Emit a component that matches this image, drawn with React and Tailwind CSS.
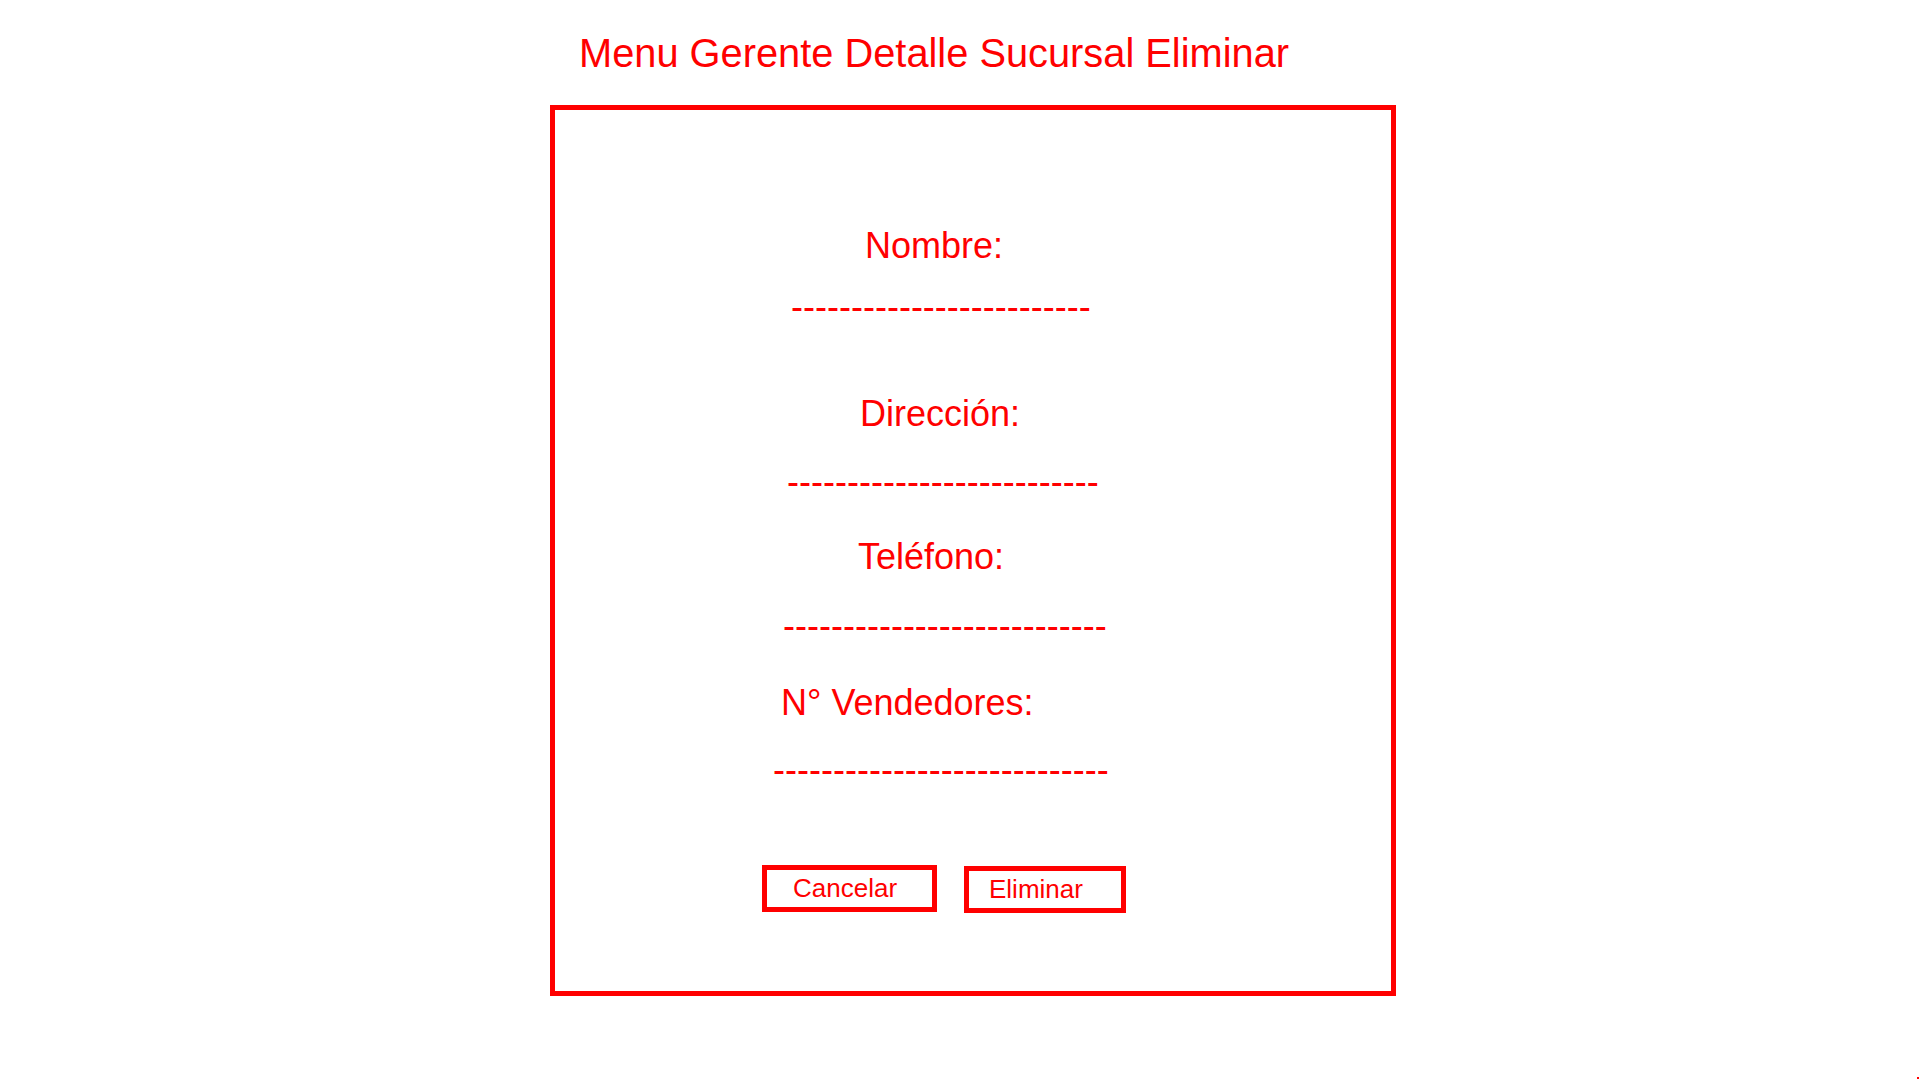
import React from "react";

const rows = [
  { text: "Nombre:", mt: "mt-[118px]", ml: "ml-[310px]" },
  { text: "-".repeat(25), mt: "mt-[25px]", ml: "ml-[236px]" },
  { text: "Dirección:", mt: "mt-[71px]", ml: "ml-[305px]" },
  { text: "-".repeat(26), mt: "mt-[32px]", ml: "ml-[232px]" },
  { text: "Teléfono:", mt: "mt-[39px]", ml: "ml-[303px]" },
  { text: "-".repeat(27), mt: "mt-[33px]", ml: "ml-[228px]" },
  { text: "N° Vendedores:", mt: "mt-[41px]", ml: "ml-[226px]" },
  { text: "-".repeat(28), mt: "mt-[31px]", ml: "ml-[218px]" },
];

export default function App() {
  return (
    <div className="relative min-h-[1080px] w-[1920px] bg-white font-['Liberation_Sans',Arial,sans-serif] text-[#ff0000]">
      <div className="pt-[33px] pl-[579px] text-[39.8px] leading-[40px] whitespace-nowrap">
        Menu Gerente Detalle Sucursal Eliminar
      </div>
      <div className="mt-[32px] ml-[550px] flex h-[891px] w-[846px] flex-col border-[5px] border-[#ff0000]">
        {rows.map((r, i) => (
          <div
            key={i}
            className={`${r.mt} ${r.ml} h-[36px] text-[36px] leading-[36px] whitespace-nowrap`}
          >
            {r.text}
          </div>
        ))}
        <div className="mt-[77px] ml-[207px] flex items-start gap-[27px]">
          <div className="h-[47px] w-[175px] border-[5px] border-[#ff0000] pt-[5px] pl-[26px] text-[26px] leading-[26px] whitespace-nowrap">
            Cancelar
          </div>
          <div className="mt-[1px] h-[47px] w-[162px] border-[5px] border-[#ff0000] pt-[5px] pl-[20px] text-[26px] leading-[26px] whitespace-nowrap">
            Eliminar
          </div>
        </div>
      </div>
      <div className="absolute right-[1px] bottom-[1px] h-[2px] w-[2px] bg-[#ff0000]" />
    </div>
  );
}
